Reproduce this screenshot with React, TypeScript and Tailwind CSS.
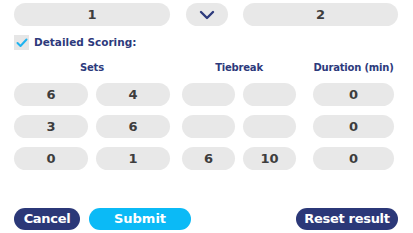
import React, { useState } from 'react';

const font = { fontFamily: '"DejaVu Sans", "Noto Sans", sans-serif' };

const Pill: React.FC<{ value: string; className: string }> = ({ value, className }) => (
  <div
    className={`h-[23px] rounded-full bg-[#e8e8e8] flex items-center justify-center text-[13px] font-bold text-[#3d3d3d] ${className}`}
  >
    {value}
  </div>
);

const rows = [
  { s1: '6', s2: '4', t1: '', t2: '', d: '0' },
  { s1: '3', s2: '6', t1: '', t2: '', d: '0' },
  { s1: '0', s2: '1', t1: '6', t2: '10', d: '0' },
];

const App: React.FC = () => {
  const [detailed, setDetailed] = useState(true);

  return (
    <div className="w-[413px] h-[233px] bg-white overflow-hidden flex flex-col" style={font}>
      <div className="flex pl-[14px] mt-[3px]">
        <Pill value="1" className="w-[156px]" />
        <button className="ml-[16px] w-[42px] h-[23px] rounded-full bg-[#e8e8e8] flex items-center justify-center">
          <svg width="16" height="10" viewBox="0 0 16 10" fill="none">
            <path d="M2 2l6 6 6-6" stroke="#2d3a7c" strokeWidth="2.4" strokeLinecap="round" strokeLinejoin="round" />
          </svg>
        </button>
        <Pill value="2" className="ml-[15px] w-[155px]" />
      </div>

      <label className="flex items-center pl-[14px] mt-[9px] cursor-pointer">
        <span
          onClick={() => setDetailed(!detailed)}
          className="w-[15px] h-[15px] bg-[#e6e6e6] flex items-center justify-center"
        >
          {detailed && (
            <svg width="12" height="10" viewBox="0 0 12 10" fill="none">
              <path d="M1.5 5l3 3 6-6.5" stroke="#1fb3f0" strokeWidth="2" strokeLinecap="round" strokeLinejoin="round" />
            </svg>
          )}
        </span>
        <span className="ml-[5px] text-[10.5px] font-bold text-[#2d3a7c]">Detailed Scoring:</span>
      </label>

      <div className="flex pl-[14px] mt-[9px] text-[10px] font-bold text-[#2d3a7c] tracking-[-0.2px]">
        <div className="w-[156px] text-center">Sets</div>
        <div className="ml-[12px] w-[114px] text-center">Tiebreak</div>
        <div className="ml-[17px] w-[81px] text-center">Duration (min)</div>
      </div>

      <div className="flex flex-col gap-[9px] mt-[8px]">
        {rows.map((r, i) => (
          <div key={i} className="flex pl-[14px]">
            <Pill value={r.s1} className="w-[74px]" />
            <Pill value={r.s2} className="ml-[8px] w-[74px]" />
            <Pill value={r.t1} className="ml-[12px] w-[53px]" />
            <Pill value={r.t2} className="ml-[8px] w-[53px]" />
            <Pill value={r.d} className="ml-[17px] w-[81px]" />
          </div>
        ))}
      </div>

      <div className="flex items-center pl-[14px] pr-[15px] mt-[38px]">
        <button className="w-[66px] h-[22px] rounded-full bg-[#2b3878] text-white text-[13px] font-bold tracking-[-0.3px]">Cancel</button>
        <button className="ml-[9px] w-[102px] h-[22px] rounded-full bg-[#0bbaf6] text-white text-[13px] font-bold">Submit</button>
        <button className="ml-auto w-[102px] h-[22px] rounded-full bg-[#2b3878] text-white text-[13px] font-bold tracking-[-0.3px]">Reset result</button>
      </div>
    </div>
  );
};

export default App;
